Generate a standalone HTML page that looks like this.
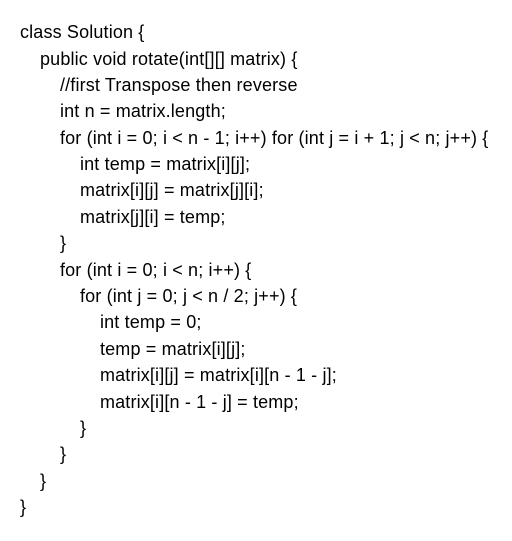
<!DOCTYPE html>
<html><head><meta charset="utf-8"><style>
html,body{margin:0;padding:0;background:#fff;}
body{width:512px;height:541px;position:relative;overflow:hidden;font-family:"Liberation Sans",sans-serif;font-size:18px;color:#000;letter-spacing:0.15px;}
.l{position:absolute;white-space:pre;line-height:22px;}
</style></head><body>
<div class="l" style="left:20px;top:21px">class Solution {</div>
<div class="l" style="left:40px;top:48px">public void rotate(int[][] matrix) {</div>
<div class="l" style="left:60px;top:74px">//first Transpose then reverse</div>
<div class="l" style="left:60px;top:100px">int n = matrix.length;</div>
<div class="l" style="left:60px;top:127px">for (int i = 0; i &lt; n - 1; i++) for (int j = i + 1; j &lt; n; j++) {</div>
<div class="l" style="left:80px;top:153px">int temp = matrix[i][j];</div>
<div class="l" style="left:80px;top:179px">matrix[i][j] = matrix[j][i];</div>
<div class="l" style="left:80px;top:206px">matrix[j][i] = temp;</div>
<div class="l" style="left:60px;top:232px">}</div>
<div class="l" style="left:60px;top:259px">for (int i = 0; i &lt; n; i++) {</div>
<div class="l" style="left:80px;top:285px">for (int j = 0; j &lt; n / 2; j++) {</div>
<div class="l" style="left:100px;top:311px">int temp = 0;</div>
<div class="l" style="left:100px;top:338px">temp = matrix[i][j];</div>
<div class="l" style="left:100px;top:364px">matrix[i][j] = matrix[i][n - 1 - j];</div>
<div class="l" style="left:100px;top:391px">matrix[i][n - 1 - j] = temp;</div>
<div class="l" style="left:80px;top:417px">}</div>
<div class="l" style="left:60px;top:443px">}</div>
<div class="l" style="left:40px;top:470px">}</div>
<div class="l" style="left:20px;top:496px">}</div>
</body></html>
